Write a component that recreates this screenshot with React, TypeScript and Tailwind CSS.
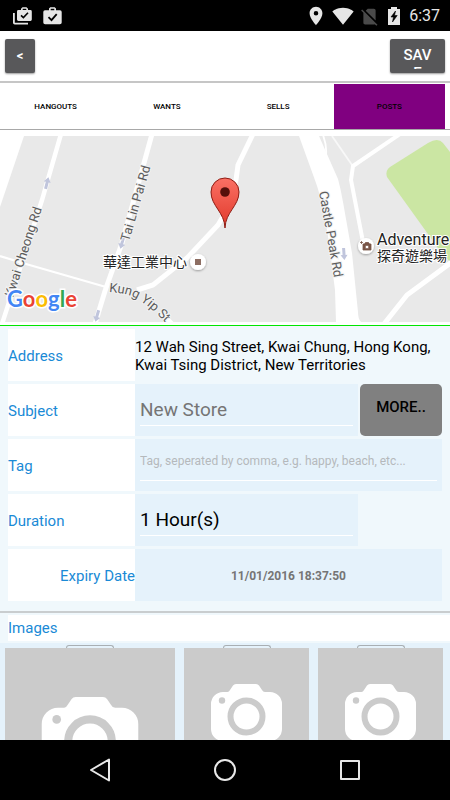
import { MdPlace, MdSignalCellularNoSim, MdSignalWifi4Bar } from "react-icons/md";

const tabs = ["HANGOUTS", "WANTS", "SELLS", "POSTS"];

const googleLetters = [
  ["G", "#4285f4"],
  ["o", "#ea4335"],
  ["o", "#fbbc05"],
  ["g", "#4285f4"],
  ["l", "#34a853"],
  ["e", "#ea4335"],
];

function StatusBar() {
  return (
    <div className="flex h-[31px] shrink-0 items-center justify-between bg-black pt-px pr-[10px] pl-[13px] text-[#e6e6e6]">
      <div className="flex items-center gap-[11px]">
        <svg width="19" height="18" viewBox="0 0 19 18" fill="currentColor">
          <path d="M0 6h1.8v9.7H15v1.8H1.8A1.8 1.8 0 0 1 0 15.7z" />
          <path
            fillRule="evenodd"
            d="M8 3V1.8L9.5.3h4L15 1.8V3h2.4a1.4 1.4 0 0 1 1.4 1.4v8.2a1.4 1.4 0 0 1-1.4 1.4H5.400A1.4 1.4 0 0 1 4 12.600V4.400A1.4 1.4 0 0 1 5.400 3zM9.700 3h3.600V1.800H9.700z"
          />
          <path d="M8 8.300l2.400 2.300 4.600-4.800" fill="none" stroke="#000" strokeWidth="1.6" />
        </svg>
        <svg width="19" height="18" viewBox="0 0 19 18" fill="currentColor">
          <path
            fillRule="evenodd"
            d="M6 3.300V1.500L7.300.200h4.400L13 1.500v1.800h4a1.700 1.700 0 0 1 1.700 1.700v10.500a1.800 1.800 0 0 1-1.800 1.800H2.100a1.800 1.800 0 0 1-1.800-1.800V5A1.700 1.700 0 0 1 2 3.300zM7.700 3.300h3.600V1.800H7.700z"
          />
          <path d="M5.500 10.200l3 2.900 5.200-6" fill="none" stroke="#000" strokeWidth="1.8" />
        </svg>
      </div>
      <div className="flex items-center">
        <MdPlace size={22} />
        <MdSignalWifi4Bar size={22} className="ml-[5px]" />
        <MdSignalCellularNoSim size={21} className="ml-[5px] text-[#4a4a4a]" />
        <svg width="12" height="18" viewBox="0 0 12 18" className="ml-[8px]">
          <path d="M3 0h6v2h3v16H0V2h3z" fill="currentColor" />
          <path d="M7.500 4L3 10h2.500l-1 5L9.200 8.500H6.500z" fill="#000" stroke="#000" strokeWidth="0.6" />
        </svg>
        <span className="ml-[9px] text-base">6:37</span>
      </div>
    </div>
  );
}

function Arrow({ x, y, angle }: { x: number; y: number; angle: number }) {
  return (
    <path
      d="M0-6l3.500 5H1.500v7h-3v-7h-2z"
      fill="#c0c5dc"
      transform={`translate(${x} ${y}) rotate(${angle})`}
    />
  );
}

function StreetMap() {
  return (
    <svg
      viewBox="0 0 450 186"
      preserveAspectRatio="xMidYMid slice"
      className="mt-[6px] block h-[186px] w-full font-['Roboto','Noto_Sans_CJK_TC',sans-serif]"
      role="img"
      aria-label="Map"
    >
      <defs>
        <linearGradient id="pin" x1="0" y1="0" x2="0" y2="1">
          <stop offset="0" stopColor="#fb7064" />
          <stop offset="1" stopColor="#e0392b" />
        </linearGradient>
        <filter id="shade" x="-30%" y="-30%" width="160%" height="160%">
          <feDropShadow dx="0" dy="1" stdDeviation="0.8" floodOpacity="0.35" />
        </filter>
        <path id="kungYip" d="M109 156C121 157 130 158 139 164C148 170 155 176 168 189" />
      </defs>

      <rect width="450" height="186" fill="#e9e9e9" />
      <path d="M387 41Q385 35 390 31L428 7Q438 1 443 7L450 16V126L438 112z" fill="#cbe6a3" />

      {/* Roads */}
      <path d="M0 0H24L0 71z" fill="#fff" />
      <path
        d="M299 0H319L338 43Q341 54 343 66L352 117L358 176Q358 183 361 186H336L335 154L328 100Q322 64 316 47z"
        fill="#fff"
      />
      <g fill="none" stroke="#fff">
        <path d="M61-2L42 64L2 188" strokeWidth="4.5" />
        <path d="M0 120L26 128L106 151" strokeWidth="2.2" />
        <path d="M152-2L122 107L105 155L95 188" strokeWidth="5" />
        <path d="M137 154L153 149L187 122L218 89L228 72L236 44L238 29L253-2" strokeWidth="5" />
        <path d="M162 178L172 188" strokeWidth="5" />
        <path d="M323-1Q327 10 326 19L321 26" strokeWidth="1.8" />
        <path d="M332 0L352 29" stroke="#f8f8f8" strokeWidth="1.8" />
        <path d="M400-2L353 30L351 44L363 106" strokeWidth="4" />
        <path d="M452 126L407 159L384 188" strokeWidth="5" />
      </g>

      <Arrow x={47} y={47} angle={14} />
      <Arrow x={122} y={107} angle={196} />
      <Arrow x={97} y={180} angle={196} />
      <Arrow x={344} y={118} angle={176} />

      {/* Street names */}
      <g fill="#5c5c5c" stroke="#f2f2f2" strokeWidth="2" paintOrder="stroke" fontSize="13">
        <text transform="translate(13 162) rotate(-72)">Kwai Cheong Rd</text>
        <text transform="translate(129 106) rotate(-74)">Tai Lin Pai Rd</text>
        <text transform="translate(319 56) rotate(80)">Castle Peak Rd</text>
        <text>
          <textPath href="#kungYip">Kung Yip St</textPath>
        </text>
      </g>

      {/* Places */}
      <g fill="#222" stroke="#fff" strokeWidth="2" paintOrder="stroke">
        <text x="103" y="131" fontSize="14">華達工業中心</text>
        <text x="377" y="109" fontSize="16">Adventure</text>
        <text x="377" y="125" fontSize="14">探奇遊樂場</text>
      </g>
      <g filter="url(#shade)" fill="#fff">
        <circle cx="198" cy="126" r="8" />
        <circle cx="366" cy="110" r="8" />
      </g>
      <rect x="195" y="123" width="6" height="6" fill="#8d6e63" />
      <path
        fillRule="evenodd"
        d="M363 108h1.500l1-1.500h3l1 1.500h1.500v6h-8zM367 109.200a1.800 1.800 0 1 0 .01 0zM361.500 105v3M360 106.500h3"
        fill="#795548"
        stroke="#795548"
        strokeWidth="0.8"
      />

      <path
        d="M225 92C224.500 76 211 70 211 56A14 14 0 0 1 239 56C239 70 225.500 76 225 92z"
        fill="url(#pin)"
        stroke="#8f1d14"
        strokeWidth="1"
      />
      <circle cx="225" cy="56" r="4.8" fill="#55100b" />

      <text
        x="7"
        y="171"
        fontSize="22"
        stroke="#fff"
        strokeWidth="3"
        paintOrder="stroke"
        className="font-['Lato',sans-serif] font-bold"
      >
        {googleLetters.map(([letter, color], i) => (
          <tspan key={i} fill={color}>
            {letter}
          </tspan>
        ))}
      </text>
    </svg>
  );
}

const labelClass = "flex w-[127px] shrink-0 items-center bg-white pt-[2px] text-[15px] text-[#1a8ad6]";
const inputClass = "w-full min-w-0 border-b border-white bg-transparent outline-none";

function PostForm() {
  return (
    <form className="flex flex-col gap-[3px] border-t border-[#00e600] bg-[#f0f8fc] px-[8px] pt-[3px] pb-[10px]">
      <div className="flex h-[52px]">
        <div className={labelClass}>Address</div>
        <p className="flex-1 self-center pt-px text-[15px] leading-[18px] text-black">
          12 Wah Sing Street, Kwai Chung, Hong Kong, Kwai Tsing District, New Territories
        </p>
      </div>
      <div className="flex h-[52px]">
        <label htmlFor="subject" className={labelClass}>Subject</label>
        <div className="flex min-w-0 flex-1 bg-[#e5f2fb] px-[5px] pb-[10px]">
          <input id="subject" defaultValue="New Store" className={`${inputClass} pt-[12px] text-[19px] text-[#757575]`} />
        </div>
        <button type="button" className="ml-[2px] w-[82px] shrink-0 rounded-[5px] bg-[#808080] pb-[5px] text-[15px] font-medium text-black">
          MORE..
        </button>
      </div>
      <div className="flex h-[52px]">
        <label htmlFor="tag" className={labelClass}>Tag</label>
        <div className="flex min-w-0 flex-1 bg-[#e5f2fb] px-[5px] pb-[10px]">
          <input
            id="tag"
            placeholder="Tag, seperated by comma, e.g. happy, beach, etc..."
            className={`${inputClass} pt-[2px] text-[12px] placeholder:text-[#b5b9bc]`}
          />
        </div>
      </div>
      <div className="flex h-[52px] pr-[84px]">
        <label htmlFor="duration" className={labelClass}>Duration</label>
        <div className="flex min-w-0 flex-1 bg-[#e5f2fb] px-[5px] pb-[10px]">
          <input id="duration" defaultValue="1 Hour(s)" className={`${inputClass} pt-[12px] text-[19px] text-black`} />
        </div>
      </div>
      <div className="flex h-[52px]">
        <label htmlFor="expiry" className={`${labelClass} justify-end`}>Expiry Date</label>
        <output id="expiry" className="flex flex-1 items-center justify-center bg-[#e5f2fb] pt-[2px] text-[12px] font-bold text-[#757575]">
          11/01/2016 18:37:50
        </output>
      </div>
    </form>
  );
}

function PhotoTile() {
  return (
    <button type="button" aria-label="Add image" className="flex flex-col items-center">
      <span className="h-[3px] w-[48px] rounded-t-[3px] border-x border-t border-[#a9afb3]" />
      <svg viewBox="0 0 125 125" className="block w-full bg-[#cbcbcb]">
        <path
          d="M39 44H43.500Q45 44 46 42L49 37.500Q50 36 52 36H72Q74 36 75 37.500L78 42Q79 44 81 44H86A12 12 0 0 1 98 56V81A12 12 0 0 1 86 93H39A12 12 0 0 1 27 81V56A12 12 0 0 1 39 44z"
          fill="#fff"
        />
        <circle cx="62.5" cy="68.5" r="16" fill="none" stroke="#cbcbcb" strokeWidth="6" />
        <circle cx="38" cy="52.5" r="3.2" fill="#cbcbcb" />
      </svg>
    </button>
  );
}

function NavBar() {
  return (
    <nav className="flex h-[60px] shrink-0 justify-center bg-black">
      <button type="button" aria-label="Back" className="flex w-[125px] items-center justify-center">
        <svg width="20" height="24" viewBox="0 0 20 24" fill="none" stroke="#e8e8e8" strokeWidth="2" strokeLinejoin="round">
          <path d="M19 1.500v21L1 12z" />
        </svg>
      </button>
      <button type="button" aria-label="Home" className="flex w-[125px] items-center justify-center">
        <svg width="22" height="22" viewBox="0 0 22 22" fill="none" stroke="#e8e8e8" strokeWidth="2">
          <circle cx="11" cy="11" r="10" />
        </svg>
      </button>
      <button type="button" aria-label="Recent apps" className="flex w-[125px] items-center justify-center">
        <svg width="20" height="20" viewBox="0 0 20 20" fill="none" stroke="#e8e8e8" strokeWidth="2" strokeLinejoin="round">
          <rect x="1" y="1" width="18" height="18" />
        </svg>
      </button>
    </nav>
  );
}

export default function App() {
  return (
    <div className="flex h-screen flex-col bg-white font-['Roboto',sans-serif]">
      <StatusBar />

      <header className="flex h-[52px] shrink-0 items-center justify-between border-b-2 border-[#c6c6c6] px-[5px]">
        <button type="button" aria-label="Back" className="h-[34px] w-[30px] rounded-[2px] bg-[#58585a] text-[13px] font-bold text-white shadow-[0_1px_2px_#0006]">
          &lt;
        </button>
        {/* The label breaks after its third letter and the second line is cut off */}
        <button type="button" className="flex h-[34px] w-[55px] justify-center rounded-[2px] bg-[#58585a] pt-[7px] font-medium text-white shadow-[0_1px_2px_#0006]">
          <span className="h-[23px] w-[32px] overflow-hidden text-[15px] leading-[18px] break-all">SAVE</span>
        </button>
      </header>

      <div className="min-h-0 flex-1 overflow-y-auto [scrollbar-width:none]">
        <div className="grid h-[47px] grid-cols-4 border-b border-[#a8a8a8] pt-px pr-[5px]">
          {tabs.map((tab) => (
            <button
              key={tab}
              type="button"
              className={`text-[8px] font-medium text-black ${tab === "POSTS" ? "bg-[#800080]" : ""}`}
            >
              {tab}
            </button>
          ))}
        </div>

        <StreetMap />
        <div className="h-[3px]" />
        <PostForm />

        <section className="border-t-2 border-[#c9cdcf] bg-[#e5f2fb]">
          <div className="border-y-2 border-l-[8px] border-[#f0f8fc]">
            <h2 className="bg-white text-[15px] leading-[26px] text-[#1a8ad6]">Images</h2>
          </div>
          <div className="grid grid-cols-[170fr_125fr_125fr] items-start gap-[9px] pt-[2px] pr-[7px] pl-[5px]">
            <PhotoTile />
            <PhotoTile />
            <PhotoTile />
          </div>
        </section>
      </div>

      <NavBar />
    </div>
  );
}
